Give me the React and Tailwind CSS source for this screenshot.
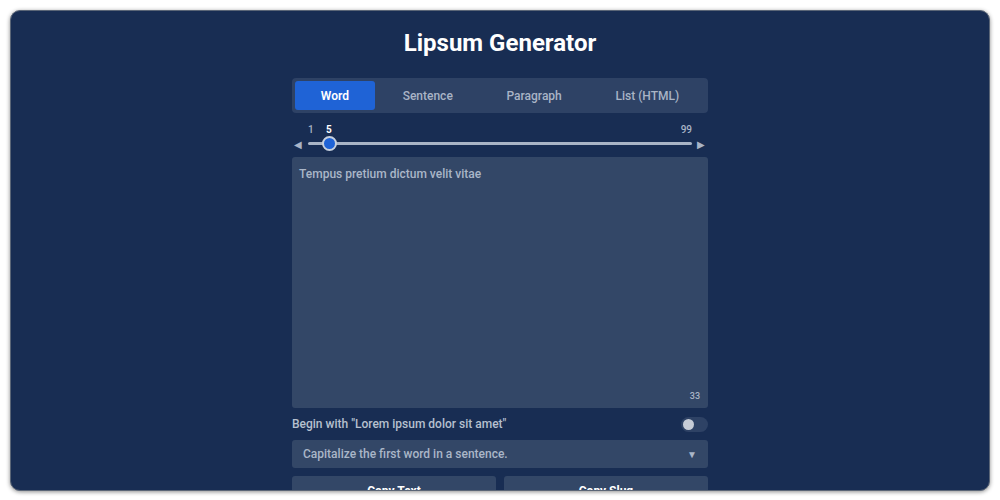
import React, { useState } from "react";

const tabs = ["Word", "Sentence", "Paragraph", "List (HTML)"];

export default function App() {
  const [tab, setTab] = useState("Word");
  const [lorem, setLorem] = useState(false);
  const text = "Tempus pretium dictum velit vitae";

  return (
    <div className="w-[1000px] h-[500px] bg-white p-[10px] pb-[9px] font-['Roboto',sans-serif]">
      <div className="w-full h-full rounded-[10px] bg-[#182d53] border border-[#5b6677] shadow-[0_1px_4px_rgba(0,0,0,0.45)] overflow-hidden flex flex-col items-center">
        <h1 className="mt-[17px] text-[24px] leading-[30px] font-bold text-white">
          Lipsum Generator
        </h1>

        <div className="w-[416px] mt-[20px] flex flex-col">
          {/* Tabs */}
          <div className="h-[35px] rounded bg-[#2e4265] p-[3px] flex gap-[2px]">
            {tabs.map((t) => (
              <button
                key={t}
                onClick={() => setTab(t)}
                className={
                  t === tab
                    ? "flex-auto rounded-[3px] bg-[#1f63d6] text-white text-[12px] font-semibold"
                    : "flex-auto rounded-[3px] text-[#a9b4c6] text-[12px] font-medium"
                }
              >
                {t}
              </button>
            ))}
          </div>

          {/* Slider */}
          <div className="relative h-[44px]">
            <span className="absolute left-[16px] top-[9px] text-[10px] text-[#a9b4c6] font-medium">1</span>
            <span className="absolute left-[34px] top-[9px] text-[10px] text-white font-bold">5</span>
            <span className="absolute right-[16px] top-[9px] text-[10px] text-[#a9b4c6] font-medium">99</span>
            <span className="absolute left-[2px] top-[24px] text-[10px] text-[#a9b4c6]">◀</span>
            <span className="absolute right-[3px] top-[24px] text-[10px] text-[#a9b4c6]">▶</span>
            <div className="absolute left-[16px] right-[16px] top-[29px] h-[3px] rounded bg-[#a9b4c6]" />
            <div className="absolute left-[30px] top-[23px] w-[15px] h-[15px] rounded-full bg-[#1f63d6] border-2 border-[#c6d0de]" />
          </div>

          {/* Output */}
          <div className="relative h-[251px] rounded-[3px] bg-[#334767] px-[7px] py-[8px]">
            <p className="text-[12px] font-medium text-[#aab6c8]">{text}</p>
            <span className="absolute right-[8px] bottom-[5px] text-[9px] text-[#a9b4c6] font-medium">33</span>
          </div>

          {/* Lorem toggle */}
          <div className="mt-[8px] flex items-center justify-between h-[16px]">
            <span className="text-[12px] font-medium text-[#b6c0cf]">
              Begin with "Lorem ipsum dolor sit amet"
            </span>
            <button
              onClick={() => setLorem(!lorem)}
              className="w-[27px] h-[15px] rounded-full bg-[#2e4265] p-[2px] flex items-center"
            >
              <span className="w-[11px] h-[11px] rounded-full bg-[#c6ccd6]" />
            </button>
          </div>

          {/* Select */}
          <div className="mt-[8px] h-[28px] rounded-[3px] bg-[#334767] px-[11px] flex items-center justify-between">
            <span className="text-[12px] font-medium text-[#aab6c8]">
              Capitalize the first word in a sentence.
            </span>
            <span className="text-[10px] text-[#aab6c8]">▼</span>
          </div>

          {/* Copy buttons */}
          <div className="mt-[8px] grid grid-cols-2 gap-[8px]">
            <button className="h-[30px] rounded-[3px] bg-[#334767] text-[12px] font-bold text-white">
              Copy Text
            </button>
            <button className="h-[30px] rounded-[3px] bg-[#334767] text-[12px] font-bold text-white">
              Copy Slug
            </button>
          </div>
        </div>
      </div>
    </div>
  );
}
